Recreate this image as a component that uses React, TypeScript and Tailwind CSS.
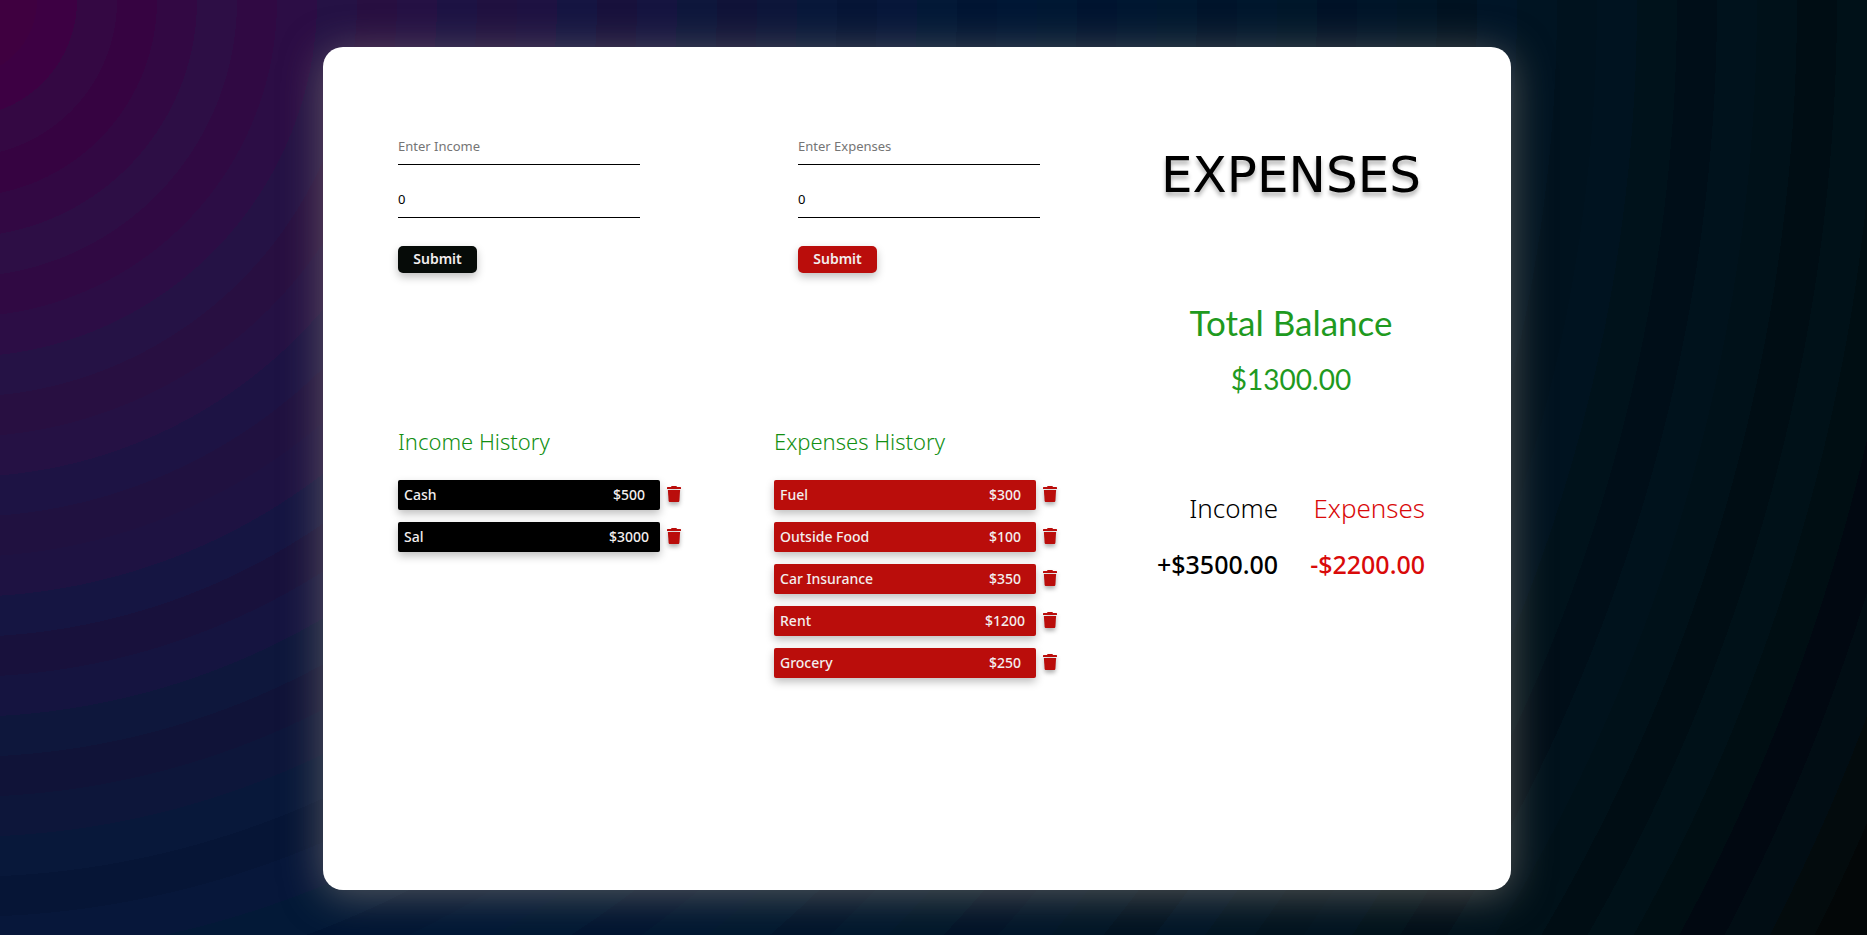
type Entry = { name: string; amount: number };

const incomes: Entry[] = [
  { name: "Cash", amount: 500 },
  { name: "Sal", amount: 3000 },
];

const expenses: Entry[] = [
  { name: "Fuel", amount: 300 },
  { name: "Outside Food", amount: 100 },
  { name: "Car Insurance", amount: 350 },
  { name: "Rent", amount: 1200 },
  { name: "Grocery", amount: 250 },
];

const total = (entries: Entry[]) => entries.reduce((sum, e) => sum + e.amount, 0);

// One colour per ring, from the centre outwards; the first disc is two rings wide.
const rings = [
  "#3f0040", "#3f0040", "#3d0043", "#340843", "#360341", "#320843", "#2d0e45", "#300943",
  "#2c0d45", "#251245", "#280f41", "#251144", "#1d1344", "#201140", "#1e1242", "#151542",
  "#18113c", "#151440", "#0e173c", "#101338", "#0d163a", "#08183a", "#061536", "#07173a",
  "#031937", "#011533", "#001735", "#001833", "#001430", "#001731", "#00182f", "#00142b",
  "#00172d", "#00172a", "#001227", "#001529", "#001526", "#001221", "#001527", "#001422",
  "#00121e", "#001320", "#00121b", "#000e18", "#00121c", "#001119", "#000d14", "#001118",
  "#000e13", "#010811", "#010d14", "#030b0d", "#030708",
];
const ringWidth = 40;
const backdrop = `radial-gradient(circle at -40px 0px, ${rings
  .map((c, i) => `${c} ${Math.max(0, i * ringWidth - 3)}px ${(i + 1) * ringWidth - 3}px`)
  .join(", ")})`;

function TrashIcon() {
  return (
    <svg viewBox="0 0 14 16" className="block h-4 w-[14px]" fill="currentColor" aria-hidden="true">
      <path d="M4 1 4.6 0h4.8L10 1h3.4c.4 0 .6.2.6.5V3H0V1.500C0 1.200.2 1 .6 1Z" />
      <path d="M.9 4h12.200l-.7 10.700c-.1.800-.6 1.300-1.400 1.300H3c-.8 0-1.300-.5-1.400-1.300Z" />
    </svg>
  );
}

function EntryForm({ placeholder, tone }: { placeholder: string; tone: string }) {
  const field =
    "block h-[37px] w-full border-b border-black bg-transparent text-[13px] text-black outline-none placeholder:text-[#757575]";
  return (
    <form className="w-[242px]" onSubmit={(e) => e.preventDefault()}>
      <input type="text" aria-label={placeholder} placeholder={placeholder} className={field} />
      <input type="text" inputMode="numeric" aria-label={`${placeholder} amount`} defaultValue="0" className={`mt-4 ${field}`} />
      <button
        type="submit"
        className={`mt-7 flex h-[27px] w-[79px] items-center justify-center rounded-[5px] pb-[2px] text-sm font-semibold text-[#f3eeee] shadow-[0_4px_8px_rgba(0,0,0,0.25)] ${tone}`}
      >
        Submit
      </button>
    </form>
  );
}

function History({ title, entries, tone }: { title: string; entries: Entry[]; tone: string }) {
  return (
    <section>
      <h2 className="text-[22px] leading-[26px] font-light text-[#128f12]">{title}</h2>
      <ul className="mt-[26px] flex flex-col gap-3">
        {entries.map((e) => (
          <li key={e.name} className="flex items-center gap-[7px]">
            <div className={`flex h-[30px] w-[262px] items-center justify-between rounded-[2px] pb-[2px] pl-[6px] text-[14px] font-medium text-[#f3eeee] shadow-[0_4px_8px_rgba(0,0,0,0.25)] ${tone}`}>
              <span>{e.name}</span>
              <span className="w-[62px] text-center">${e.amount}</span>
            </div>
            <button type="button" aria-label={`Delete ${e.name}`} className="pb-[2px] text-[#ba0d0b] drop-shadow-[0_3px_2px_rgba(0,0,0,0.3)]">
              <TrashIcon />
            </button>
          </li>
        ))}
      </ul>
    </section>
  );
}

export default function App() {
  const income = total(incomes);
  const spent = total(expenses);
  return (
    <div
      className="grid min-h-screen grid-cols-[323fr_1188fr_356fr] pt-[47px] pb-[45px] font-['Noto_Sans',sans-serif]"
      style={{ background: backdrop }}
    >
      <main className="col-start-2 grid grid-cols-[748fr_290fr] rounded-[20px] bg-white px-[75px] pt-[81px] shadow-[0_5px_40px_rgba(140,132,122,0.6)]">
        <div>
          <div className="grid grid-cols-[400fr_348fr]">
            <EntryForm placeholder="Enter Income" tone="bg-[#060b08]" />
            <EntryForm placeholder="Enter Expenses" tone="bg-[#ba0d0b]" />
          </div>
          <div className="mt-[155px] grid grid-cols-[376fr_372fr] items-start">
            <History title="Income History" entries={incomes} tone="bg-black" />
            <History title="Expenses History" entries={expenses} tone="bg-[#ba0d0b]" />
          </div>
        </div>
        <aside className="flex flex-col items-center">
          <h1 className="mt-[17px] font-['DejaVu_Sans',sans-serif] text-[50px] leading-[60px] text-black [text-shadow:0_4px_4px_rgba(0,0,0,0.3)]">
            EXPENSES
          </h1>
          <div className="mt-[97px] text-center font-['Lato',sans-serif] text-[#1f9a1f]">
            <h2 className="text-[35px] leading-10">Total Balance</h2>
            <p className="mt-[17px] text-[28px] leading-10">${(income - spent).toFixed(2)}</p>
          </div>
          <div className="mt-[93px] flex gap-8 text-right text-[25px] leading-8">
            <div>
              <h3 className="text-[26px] font-light text-black">Income</h3>
              <p className="mt-6 font-medium text-black">+${income.toFixed(2)}</p>
            </div>
            <div className="text-[#d90a0a]">
              <h3 className="text-[26px] font-light">Expenses</h3>
              <p className="mt-6 font-medium">-${spent.toFixed(2)}</p>
            </div>
          </div>
        </aside>
      </main>
    </div>
  );
}
